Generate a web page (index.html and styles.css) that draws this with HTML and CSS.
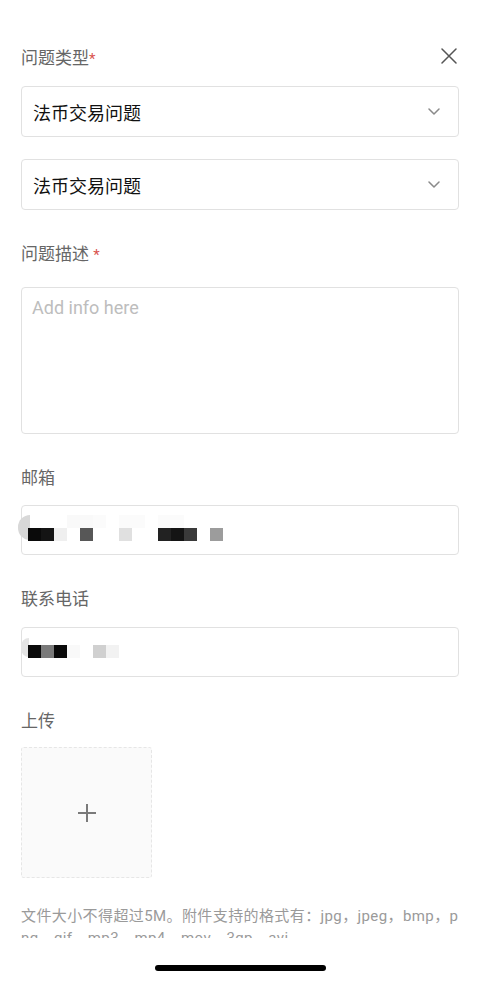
FILE: index.html
```html
<!DOCTYPE html>
<html lang="zh-CN">
<head>
<meta charset="utf-8">
<title>问题反馈</title>
<link rel="stylesheet" href="styles.css">
</head>
<body>
<div class="page">
  <div class="content">
    <div class="head">
      <div class="label">问题类型<span class="req">*</span></div>
      <svg class="close" width="16" height="16" viewBox="0 0 16 16"><path d="M1 1L15 15M15 1L1 15" stroke="#555" stroke-width="1.5" fill="none" stroke-linecap="round"/></svg>
    </div>
    <div class="select first">
      <span>法币交易问题</span>
      <svg width="12" height="7" viewBox="0 0 12 7"><path d="M1 1L6 6L11 1" stroke="#8a8a8a" stroke-width="1.5" fill="none" stroke-linecap="round" stroke-linejoin="round"/></svg>
    </div>
    <div class="select second">
      <span>法币交易问题</span>
      <svg width="12" height="7" viewBox="0 0 12 7"><path d="M1 1L6 6L11 1" stroke="#8a8a8a" stroke-width="1.5" fill="none" stroke-linecap="round" stroke-linejoin="round"/></svg>
    </div>

    <div class="label gap">问题描述 <span class="req">*</span></div>
    <div class="textarea"><span class="placeholder">Add info here</span></div>

    <div class="label gap">邮箱</div>
    <div class="input email">
      <span class="blob blob-email"></span>
      <div class="cells">
        <i></i><i></i><i></i><i class="c-f8"></i><i class="c-f8"></i><i class="c-fa"></i><i></i><i class="c-fa"></i><i class="c-fa"></i><i></i><i class="c-fa"></i><i class="c-fa"></i><i></i><i></i><i></i>
      </div>
      <div class="cells">
        <i class="c-00"></i><i class="c-11"></i><i class="c-ee"></i><i></i><i class="c-55"></i><i></i><i></i><i class="c-dd"></i><i></i><i></i><i class="c-22"></i><i class="c-11"></i><i class="c-33"></i><i></i><i class="c-99"></i>
      </div>
    </div>

    <div class="label gap">联系电话</div>
    <div class="input phone">
      <span class="blob blob-phone"></span>
      <div class="cells">
        <i class="c-00"></i><i class="c-77"></i><i class="c-00"></i><i class="c-f8"></i><i></i><i class="c-cc"></i><i class="c-f0"></i>
      </div>
    </div>

    <div class="label gap">上传</div>
    <div class="upload">
      <svg width="18" height="18" viewBox="0 0 18 18"><path d="M9 0V18M0 9H18" stroke="#7a7a7a" stroke-width="2" fill="none"/></svg>
    </div>

    <p class="help">文件大小不得超过5M。附件支持的格式有：jpg，jpeg，bmp，png，gif，mp3，mp4，mov，3gp，avi</p>
  </div>
  <div class="footer">
    <div class="indicator"></div>
  </div>
</div>
</body>
</html>
```

FILE: styles.css
```css
html, body {
  margin: 0;
  padding: 0;
  background: #ffffff;
}

body {
  font-family: Roboto, "Noto Sans CJK SC", sans-serif;
}

.page {
  width: 480px;
  height: 982px;
  display: flex;
  flex-direction: column;
  background: #ffffff;
}

.content {
  height: 938px;
  flex: none;
  overflow: hidden;
  box-sizing: border-box;
  padding: 46px 21px 0;
}

.head {
  display: flex;
  justify-content: space-between;
  align-items: flex-start;
}

.close {
  margin-top: 2px;
  margin-right: 2px;
}

.label {
  font-size: 17px;
  line-height: 24px;
  height: 24px;
  color: #666666;
}

.label.gap {
  margin-top: 32px;
}

.req {
  color: #d9534f;
  font-size: 15px;
}

.select {
  height: 51px;
  box-sizing: border-box;
  border: 1px solid #e1e1e1;
  border-radius: 4px;
  display: flex;
  align-items: center;
  justify-content: space-between;
  padding: 0 18px 0 11px;
  font-size: 18px;
  color: #111111;
}

.select.first {
  margin-top: 16px;
}

.select.second {
  margin-top: 22px;
}

.textarea {
  margin-top: 21px;
  height: 147px;
  box-sizing: border-box;
  border: 1px solid #e1e1e1;
  border-radius: 4px;
  padding: 8px 10px;
  font-size: 18px;
  line-height: 24px;
}

.placeholder {
  color: #bdbdbd;
}

.input {
  position: relative;
  height: 50px;
  box-sizing: border-box;
  border: 1px solid #e1e1e1;
  border-radius: 4px;
  padding-left: 6px;
}

.input.email {
  margin-top: 15px;
  padding-top: 9px;
}

.input.phone {
  margin-top: 16px;
  padding-top: 17px;
}

.cells {
  position: relative;
  display: flex;
  height: 13px;
}

.cells i {
  display: block;
  width: 13px;
  height: 13px;
  flex: none;
}

.c-00 { background: #0a0a0a; }
.c-11 { background: #141414; }
.c-22 { background: #222222; }
.c-33 { background: #3a3a3a; }
.c-55 { background: #575757; }
.c-77 { background: #7a7a7a; }
.c-99 { background: #9c9c9c; }
.c-cc { background: #d0d0d0; }
.c-dd { background: #e0e0e0; }
.c-ee { background: #efefef; }
.c-f0 { background: #f2f2f2; }
.c-f8 { background: #f9f9f9; }
.c-fa { background: #fbfbfb; }

.blob {
  position: absolute;
  display: block;
}

.blob-email {
  left: -4px;
  top: 9px;
  width: 12px;
  height: 25px;
  border-radius: 13px 0 0 13px;
  background: #d8d8d8;
}

.blob-phone {
  left: -1px;
  top: 10px;
  width: 8px;
  height: 19px;
  border-radius: 10px 0 0 10px;
  background: #e4e4e4;
}

.upload {
  margin-top: 14px;
  width: 131px;
  height: 131px;
  box-sizing: border-box;
  border: 1px dashed #e6e6e6;
  border-radius: 3px;
  background: #fafafa;
  display: flex;
  align-items: center;
  justify-content: center;
}

.help {
  margin: 27px 0 0;
  font-size: 15px;
  line-height: 22px;
  letter-spacing: 0.4px;
  color: #9a9a9a;
  word-break: break-all;
}

.footer {
  height: 44px;
  flex: none;
  display: flex;
  justify-content: center;
}

.indicator {
  margin-top: 27px;
  width: 171px;
  height: 6px;
  border-radius: 3px;
  background: #000000;
}
```
